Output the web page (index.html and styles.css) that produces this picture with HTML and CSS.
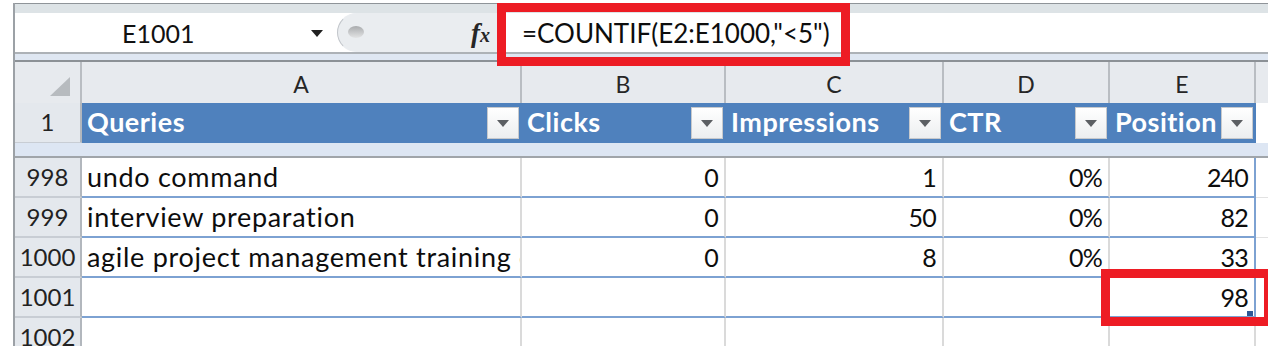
FILE: index.html
```html
<!DOCTYPE html>
<html lang="en">
<head>
<meta charset="utf-8">
<title>Excel COUNTIF</title>
<link rel="stylesheet" href="styles.css">
</head>
<body>
<div class="screen">
  <div class="sheet">
    <div class="fbar">
      <div class="fbar-top"></div>
      <div class="fbar-main">
        <div class="namebox">
          <span class="name">E1001</span>
          <span class="nb-arrow"></span>
        </div>
        <div class="tools">
          <span class="knob"></span>
          <span class="fx">f<span class="fx-x">x</span></span>
        </div>
        <div class="formula">=COUNTIF(E2:E1000,"&lt;5")</div>
      </div>
      <div class="fbar-bottom"></div>
    </div>

    <div class="grid">
      <div class="row colhead">
        <div class="corner"><span class="corner-tri"></span></div>
        <div class="ch">A</div>
        <div class="ch">B</div>
        <div class="ch">C</div>
        <div class="ch">D</div>
        <div class="ch">E</div>
        <div class="ch ch-f"></div>
      </div>

      <div class="row hdr">
        <div class="rh">1</div>
        <div class="th"><span class="th-label">Queries</span><span class="filter"></span></div>
        <div class="th"><span class="th-label">Clicks</span><span class="filter"></span></div>
        <div class="th"><span class="th-label">Impressions</span><span class="filter"></span></div>
        <div class="th"><span class="th-label">CTR</span><span class="filter"></span></div>
        <div class="th"><span class="th-label">Position</span><span class="filter"></span></div>
        <div class="th-f"></div>
      </div>

      <div class="strip"></div>

      <div class="row data">
        <div class="rh">998</div>
        <div class="td txt">undo command</div>
        <div class="td num">0</div>
        <div class="td num">1</div>
        <div class="td num">0%</div>
        <div class="td num last">240</div>
        <div class="tf"></div>
      </div>
      <div class="row data">
        <div class="rh">999</div>
        <div class="td txt">interview preparation</div>
        <div class="td num">0</div>
        <div class="td num">50</div>
        <div class="td num">0%</div>
        <div class="td num last">82</div>
        <div class="tf"></div>
      </div>
      <div class="row data">
        <div class="rh">1000</div>
        <div class="td txt">agile project management training course</div>
        <div class="td num">0</div>
        <div class="td num">8</div>
        <div class="td num">0%</div>
        <div class="td num last">33</div>
        <div class="tf"></div>
      </div>
      <div class="row data">
        <div class="rh">1001</div>
        <div class="td txt"></div>
        <div class="td num"></div>
        <div class="td num"></div>
        <div class="td num"></div>
        <div class="td num last sel">98<span class="handle"></span></div>
        <div class="tf"></div>
      </div>
      <div class="row data plain">
        <div class="rh">1002</div>
        <div class="td txt"></div>
        <div class="td num"></div>
        <div class="td num"></div>
        <div class="td num"></div>
        <div class="td num"></div>
        <div class="tf"></div>
      </div>
    </div>
  </div>

  <div class="mark mark-formula"></div>
  <div class="mark mark-cell"></div>
</div>
</body>
</html>
```

FILE: styles.css
```css
* {
  box-sizing: border-box;
  margin: 0;
  padding: 0;
}

html,
body {
  width: 1278px;
  height: 346px;
  overflow: hidden;
  background: #ffffff;
}

body {
  font-family: Lato, "Open Sans", sans-serif;
  color: #0d0d0d;
}

.screen {
  position: relative;
  width: 1278px;
  height: 346px;
  padding: 3px 10px 0 13px;
}

.sheet {
  width: 1255px;
  height: 343px;
  border-left: 2px solid #9ca1a6;
  overflow: hidden;
}

/* ---------- formula bar ---------- */
.fbar-top {
  height: 10px;
  border-top: 1px solid #8f9499;
  background: #dde3e6;
}

.fbar-main {
  height: 39px;
  display: flex;
  background: #ffffff;
}

.namebox {
  width: 322px;
  display: flex;
  align-items: center;
  padding-left: 107px;
}

.name {
  font-size: 25px;
  color: #111111;
  line-height: 1;
  padding-top: 2px;
}

.nb-arrow {
  margin-left: auto;
  margin-right: 14px;
  width: 0;
  height: 0;
  border-left: 6px solid transparent;
  border-right: 6px solid transparent;
  border-top: 7px solid #202020;
  margin-top: 2px;
}

.tools {
  width: 160px;
  display: flex;
  align-items: center;
  background: #eaedf0;
  border: 1px solid #c1c5ca;
  border-right: none;
  border-top-color: #eaedf0;
  border-bottom-color: #eaedf0;
  border-radius: 20px 0 0 20px;
  padding-left: 10px;
}

.knob {
  width: 16px;
  height: 12px;
  border-radius: 50%;
  background: linear-gradient(#a9abad, #e3e4e5);
  margin-top: -1px;
}

.fx {
  margin-left: auto;
  margin-right: 7px;
  font-family: "Liberation Serif", "DejaVu Serif", serif;
  font-style: italic;
  font-weight: bold;
  font-size: 27px;
  color: #262626;
  line-height: 1;
  padding-top: 2px;
}

.fx-x {
  font-size: 20px;
}

.formula {
  flex: 1;
  padding-left: 25px;
  display: flex;
  align-items: center;
  font-size: 26px;
  color: #0d0d0d;
  padding-top: 1px;
}

.fbar-bottom {
  height: 10px;
  border-top: 2px solid #adb2b7;
  border-bottom: 2px solid #8c9196;
  background: #dfe7f2;
}

/* ---------- grid ---------- */
.row {
  display: grid;
  grid-template-columns: 67px 440px 204px 218px 166px 146px 1fr;
  height: 40px;
}

.colhead {
  height: 41px;
  background: #e7eaee;
}

.corner {
  display: flex;
  justify-content: flex-end;
  align-items: flex-end;
  padding: 0 10px 8px 0;
  border-right: 2px solid #b9bdc2;
  border-bottom: 1px solid #a8acb1;
}

.corner-tri {
  width: 20px;
  height: 19px;
  background: #b7bbbf;
  clip-path: polygon(100% 0, 100% 100%, 0 100%);
}

.ch {
  text-align: center;
  font-size: 23px;
  line-height: 40px;
  padding-top: 2px;
  color: #262626;
  border-right: 2px solid #b9bdc2;
  border-bottom: 1px solid #a8acb1;
}

.ch-f {
  border-right: none;
}

.rh {
  background: #e4e8ed;
  border-right: 2px solid #b2b7bd;
  border-bottom: 2px solid #c8cdd4;
  text-align: center;
  font-size: 24px;
  line-height: 38px;
  color: #222222;
}

.hdr .th {
  background: #4f81bd;
  color: #ffffff;
  font-weight: bold;
  font-size: 27px;
  letter-spacing: 0.5px;
  display: flex;
  align-items: center;
  justify-content: space-between;
  padding: 0 3px 0 5px;
}

.th-label {
  padding-bottom: 3px;
}

.hdr .rh {
  border-bottom: 1px solid #c8cdd4;
}

.th-f {
  background: #ffffff;
}

.filter {
  width: 32px;
  height: 32px;
  border: 1px solid #c7c9cc;
  background: linear-gradient(#ffffff, #eceef0);
  display: flex;
  align-items: center;
  justify-content: center;
}

.filter::after {
  content: "";
  width: 0;
  height: 0;
  border-left: 6px solid transparent;
  border-right: 6px solid transparent;
  border-top: 7px solid #5c5f63;
}

.strip {
  height: 15px;
  background: #dde6f3;
  border-bottom: 2px solid #a0a5aa;
}

.data .td {
  font-size: 27px;
  letter-spacing: 0.7px;
  line-height: 38px;
  border-bottom: 2px solid #7da2d2;
  border-right: 2px solid #dadada;
  white-space: nowrap;
  overflow: hidden;
}

.data .txt {
  padding-left: 5px;
}

.data .num {
  font-size: 25px;
  letter-spacing: -0.8px;
  text-align: right;
  padding-right: 6px;
}

.data .last {
  border-right-color: #7da2d2;
}

.data .tf {
  border-bottom: 1px solid #e2e2e2;
}

.plain .td {
  border-bottom: none;
}

.plain .td:nth-child(6) {
  border-right-color: #dadada;
}

.plain .tf {
  border-bottom: none;
}

.sel {
  position: relative;
}

.handle {
  position: absolute;
  right: 1px;
  bottom: 0;
  width: 6px;
  height: 5px;
  background: #2d5795;
}

/* ---------- red annotation boxes ---------- */
.mark {
  position: absolute;
  border: 9px solid #ed1c24;
}

.mark-formula {
  left: 497px;
  top: 3px;
  width: 353px;
  height: 63px;
}

.mark-cell {
  left: 1101px;
  top: 269px;
  width: 167px;
  height: 57px;
  border-right-width: 4px;
}
```
